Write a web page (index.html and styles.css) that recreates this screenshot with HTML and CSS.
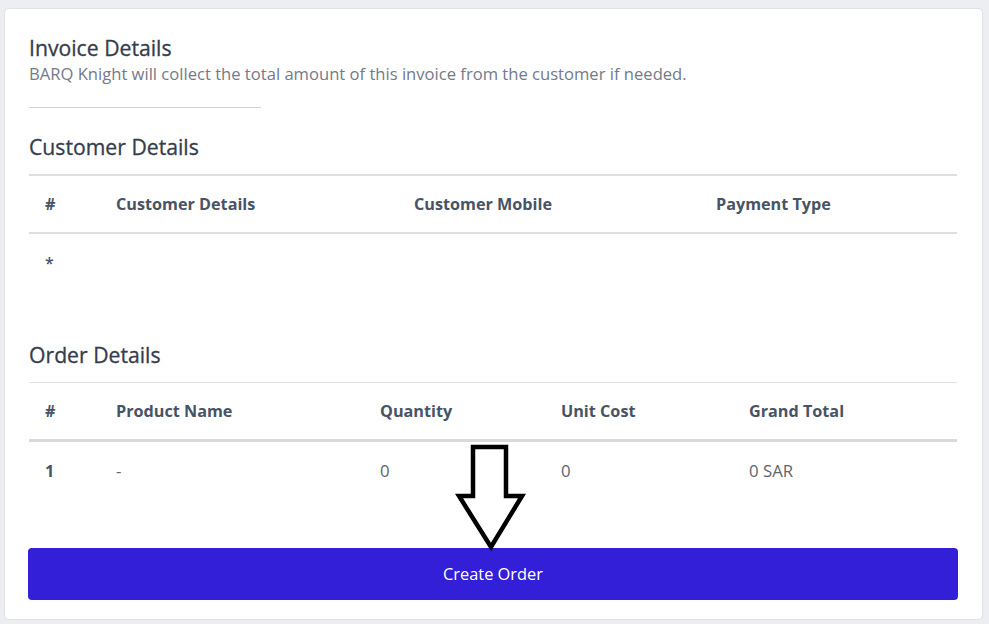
FILE: index.html
```html
<!DOCTYPE html>
<html lang="en">
<head>
<meta charset="utf-8">
<title>Invoice Details</title>
<link rel="stylesheet" href="styles.css">
</head>
<body>
<div class="card">
  <div class="section-head">
    <h2 class="title">Invoice Details</h2>
    <p class="subtitle">BARQ Knight will collect the total amount of this invoice from the customer if needed.</p>
  </div>
  <hr class="divider">

  <h3 class="heading">Customer Details</h3>
  <table class="tbl tbl-customer">
    <colgroup>
      <col class="c-num">
      <col class="c-cust">
      <col class="c-mob">
      <col>
    </colgroup>
    <thead>
      <tr><th>#</th><th>Customer Details</th><th>Customer Mobile</th><th>Payment Type</th></tr>
    </thead>
    <tbody>
      <tr><td class="star">*</td><td></td><td></td><td></td></tr>
    </tbody>
  </table>

  <h3 class="heading heading-order">Order Details</h3>
  <table class="tbl tbl-order">
    <colgroup>
      <col class="c-num">
      <col class="c-prod">
      <col class="c-qty">
      <col class="c-unit">
      <col>
    </colgroup>
    <thead>
      <tr><th>#</th><th>Product Name</th><th>Quantity</th><th>Unit Cost</th><th>Grand Total</th></tr>
    </thead>
    <tbody>
      <tr><td class="num">1</td><td>-</td><td>0</td><td>0</td><td>0 SAR</td></tr>
    </tbody>
  </table>

  <button class="btn-create" type="button">Create Order</button>

  <svg class="arrow" width="72" height="108" viewBox="0 0 72 108" aria-hidden="true">
    <polygon points="18,3 51,3 51,52 67,52 36,103 4,52 18,52" fill="#fff" stroke="#000" stroke-width="4.5" stroke-linejoin="miter"/>
  </svg>
</div>
</body>
</html>
```

FILE: styles.css
```css
* { box-sizing: border-box; }

html, body { height: 100%; }

body {
  margin: 0;
  padding: 8px 6px 4px 4px;
  background: #eceef1;
  font-family: "Open Sans", "Noto Sans", "Liberation Sans", sans-serif;
  color: #3d4452;
}

.card {
  position: relative;
  background: #fff;
  border: 1px solid #dfe2e6;
  border-radius: 5px;
  padding: 25px 24px 19px 24px;
  height: 612px;
}

.title {
  margin: 0;
  font-size: 21.2px;
  font-weight: 500;
  line-height: 27px;
  color: #353c4c;
  -webkit-text-stroke: 0.3px #353c4c;
}

.subtitle {
  margin: 0;
  font-size: 16.6px;
  line-height: 26px;
  color: #737a89;
}

.divider {
  width: 232px;
  margin: 20px 0 0 0;
  border: 0;
  border-top: 1px solid #cfd2d6;
  text-align: left;
}

.heading {
  margin: 25px 0 14px 0;
  font-size: 21.2px;
  font-weight: 500;
  line-height: 27px;
  color: #353c4c;
  -webkit-text-stroke: 0.3px #353c4c;
}

.heading-order { margin-top: 50px; margin-bottom: 14px; }

.tbl {
  width: 928px;
  border-collapse: collapse;
  font-size: 16.2px;
}

.tbl col.c-num { width: 71px; }
.tbl-customer col.c-cust { width: 298px; }
.tbl-customer col.c-mob { width: 302px; }
.tbl-order col.c-prod { width: 264px; }
.tbl-order col.c-qty { width: 181px; }
.tbl-order col.c-unit { width: 188px; }

.tbl th {
  text-align: left;
  font-weight: 700;
  color: #485365;
  padding: 16px 16px;
  line-height: 24px;
}

.tbl td {
  text-align: left;
  color: #5d6472;
  padding: 16px 16px;
  line-height: 24px;
  height: 58px;
  font-size: 16.8px;
}

.tbl-order td { padding-top: 17px; padding-bottom: 15px; }

.tbl-customer thead th {
  border-top: 2px solid #dcdfe3;
  border-bottom: 2px solid #dcdfe3;
  height: 58px;
}

.tbl-order thead th {
  border-top: 1px solid #dee1e5;
  border-bottom: 3px solid #d8dade;
  height: 58px;
  padding-top: 16px;
  padding-bottom: 16px;
}

.tbl td.star { color: #485365; font-weight: 600; font-size: 16px; vertical-align: top; padding-top: 17px; }
.tbl td.num { color: #485365; font-weight: 700; font-size: 16.2px; }

.btn-create {
  display: block;
  width: 930px;
  height: 52px;
  margin: 49px 0 0 -1px;
  border: 0;
  border-radius: 4px;
  background: #321fd7;
  color: #fff;
  font-family: inherit;
  font-size: 16.4px;
}

.arrow {
  position: absolute;
  left: 450px;
  top: 435px;
}
```
